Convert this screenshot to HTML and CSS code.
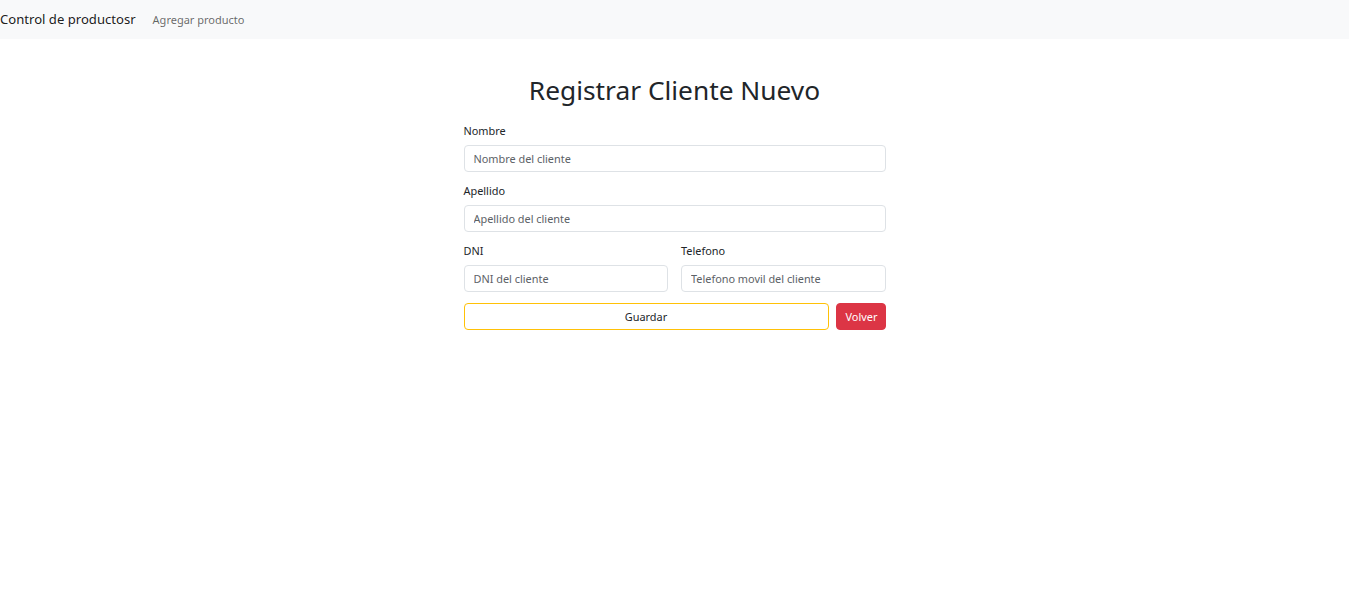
FILE: index.html
```html
<!DOCTYPE html>
<html lang="es">
<head>
<meta charset="utf-8">
<title>Registrar Cliente Nuevo</title>
<link rel="stylesheet" href="styles.css">
</head>
<body>
<nav class="navbar">
  <a class="brand" href="#">Control de productosr</a>
  <a class="nav-link" href="#">Agregar producto</a>
</nav>
<main class="content">
  <h1 class="title">Registrar Cliente Nuevo</h1>
  <form class="form">
    <div class="field">
      <label class="label" for="nombre">Nombre</label>
      <input class="input" id="nombre" type="text" placeholder="Nombre del cliente">
    </div>
    <div class="field">
      <label class="label" for="apellido">Apellido</label>
      <input class="input" id="apellido" type="text" placeholder="Apellido del cliente">
    </div>
    <div class="row">
      <div class="field">
        <label class="label" for="dni">DNI</label>
        <input class="input" id="dni" type="text" placeholder="DNI del cliente">
      </div>
      <div class="field">
        <label class="label" for="tel">Telefono</label>
        <input class="input" id="tel" type="text" placeholder="Telefono movil del cliente">
      </div>
    </div>
    <div class="actions">
      <button class="btn btn-save" type="button">Guardar</button>
      <button class="btn btn-back" type="button">Volver</button>
    </div>
  </form>
</main>
</body>
</html>
```
FILE: styles.css
```css
* { box-sizing: border-box; }
html, body { margin: 0; padding: 0; }
body {
  font-family: "Noto Sans", "Open Sans", "Liberation Sans", sans-serif;
  color: #212529;
  background: #fff;
  font-size: 10.9px;
  line-height: 1.5;
}
.navbar {
  display: flex;
  align-items: center;
  height: 39px;
  background: #f8f9fa;
  padding: 1px 0 0;
}
.brand {
  font-size: 13.1px;
  color: rgba(0,0,0,0.9);
  text-decoration: none;
  margin-right: 17px;
}
.nav-link {
  font-size: 11px;
  color: rgba(0,0,0,0.6);
  text-decoration: none;
}
.content {
  display: flex;
  flex-direction: column;
  align-items: center;
}
.title {
  font-size: 26.3px;
  font-weight: 400;
  line-height: 1.2;
  margin: 36px 0 16.5px;
}
.form {
  width: 422px;
  display: flex;
  flex-direction: column;
}
.field {
  display: flex;
  flex-direction: column;
  margin-bottom: 11px;
  min-width: 0;
}
.label {
  margin-bottom: 6px;
  font-size: 10.9px;
  line-height: 16px;
}
.input {
  height: 27px;
  padding: 4px 9px;
  font-family: inherit;
  font-size: 10.9px;
  color: #212529;
  border: 1px solid #dee2e6;
  border-radius: 4px;
  background: #fff;
  width: 100%;
}
.input::placeholder { color: #5c6166; opacity: 1; }
.row {
  display: grid;
  grid-template-columns: 1fr 1fr;
  column-gap: 13px;
}
.actions {
  display: flex;
  gap: 7px;
}
.btn {
  height: 27px;
  font-family: inherit;
  font-size: 10.9px;
  border-radius: 4px;
  padding: 0 9px;
  cursor: pointer;
}
.btn-save {
  flex: 1;
  background: #fff;
  border: 1px solid #ffc107;
  color: #212529;
}
.btn-back {
  width: 50px;
  background: #dc3545;
  border: 1px solid #dc3545;
  color: #fff;
}
```
